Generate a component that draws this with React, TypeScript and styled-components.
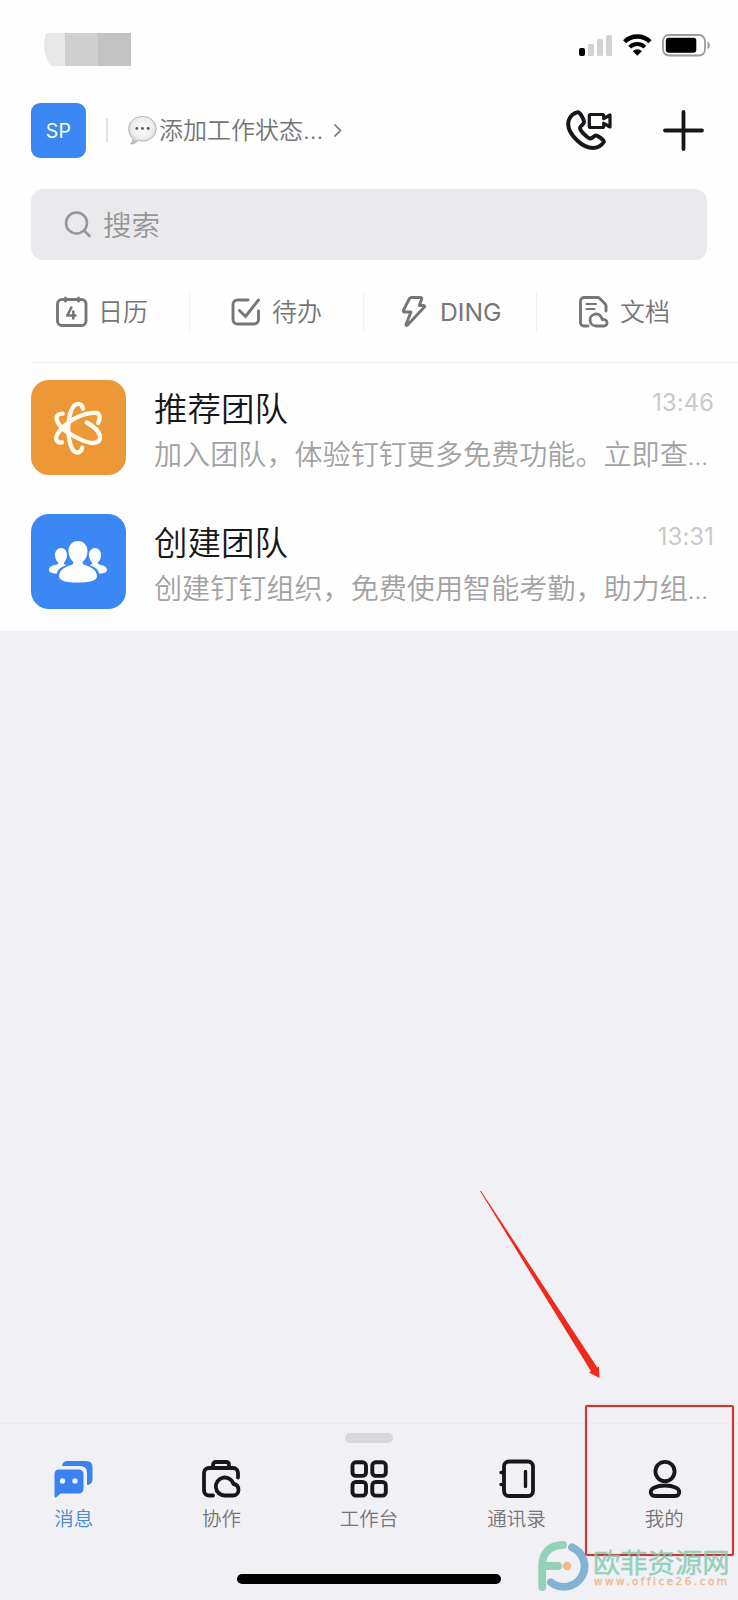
import React from 'react';
import styled, { createGlobalStyle } from 'styled-components';

const GlobalStyle = createGlobalStyle`
  * { box-sizing: border-box; }
  body { margin: 0; background: #f1f0f5; font-family: Inter, "Noto Sans CJK SC", sans-serif; }
  svg { display: block; flex: none; overflow: visible; }
`;

const Screen = styled.div`
  position: relative;
  width: 738px;
  height: 1600px;
  display: flex;
  flex-direction: column;
  overflow: hidden;
  background: #f1f0f5;
  font-weight: 350;
`;
const Panel = styled.div`background: #fefefe; height: 630.5px; flex: none;`;

const StatusBar = styled.div`
  height: 102.5px;
  padding: 33px 28px 0 44px;
  display: flex;
  justify-content: space-between;
  align-items: flex-start;
`;
const StatusIcons = styled.div`display: flex; gap: 10px; padding-top: 1px;`;

const Header = styled.div`
  height: 55px;
  padding: 0 34px 0 31px;
  display: flex;
  align-items: center;
`;
const Avatar = styled.div`
  width: 55px; height: 55px;
  border-radius: 9px;
  background: #3b87f3;
  color: #fff;
  font: 400 19.5px/56px Inter, sans-serif;
  letter-spacing: 0.3px;
  text-align: center;
`;
const Rule = styled.div`
  width: 2px;
  height: 24px;
  margin-left: 20px;
  background: #e3e3e3;
`;
const WorkStatus = styled.div`
  display: flex;
  align-items: center;
  margin-left: 20px;
  flex: 1;
  color: #747474;
  font-size: 24px;
  line-height: 36px;
`;
const WorkText = styled.span`margin: 2px 11px 0 1px; white-space: nowrap;`;
const Actions = styled.div`display: flex; gap: 51px; align-items: center;`;

const Search = styled.div`
  margin: 31.5px 31px 0;
  height: 71px;
  padding-left: 34px;
  border-radius: 12px;
  background: #eaeaec;
  display: flex;
  align-items: center;
  gap: 12px;
  color: #969698;
  font-size: 28.5px;
  line-height: 40px;
`;
const SearchLabel = styled.span`padding-top: 2px;`;

const Shortcuts = styled.div`
  margin: 31px 0 0 31px;
  height: 71px;
  width: 677px;
  display: flex;
`;
const Shortcut = styled.div<{ $w: number; $pad: number; $gap: number; $latin?: boolean }>`
  width: ${p => p.$w}px;
  height: 42px;
  padding-left: ${p => p.$pad}px;
  display: flex;
  align-items: center;
  gap: ${p => p.$gap}px;
  color: #767676;
  font-size: ${p => (p.$latin ? 24.7 : 25)}px;
  font-weight: ${p => (p.$latin ? 400 : 350)};
  line-height: 36px;
  & + & { border-left: 1px solid #f2f2f2; }
`;

const List = styled.div`margin-left: 31px; border-top: 1px solid #f0f0f0;`;
const Row = styled.div`
  height: 134px;
  padding: 17px 24px 0 0;
  display: flex;
  gap: 28px;
`;
const Tile = styled.div<{ $bg: string }>`
  width: 95px; height: 95px;
  flex: none;
  border-radius: 18px;
  background: ${p => p.$bg};
  display: flex;
  align-items: center;
  justify-content: center;
`;
const RowBody = styled.div`flex: 1; min-width: 0; padding-top: 5px;`;
const RowHead = styled.div`display: flex; justify-content: space-between; height: 49px;`;
const Title = styled.div`font-size: 33.5px; line-height: 48px; color: #171717;`;
const Time = styled.div`font-size: 23.6px; font-weight: 400; line-height: 35px; letter-spacing: 0.2px; color: #c9c9c9;`;
const Preview = styled.div`
  font-size: 28.1px;
  line-height: 42px;
  color: #a2a2a2;
  white-space: nowrap;
`;
const Dots = styled.span`font-size: 24px;`;

const Spacer = styled.div`flex: 1;`;
const TabBar = styled.nav`
  height: 177px;
  flex: none;
  border-top: 1px solid #ebebef;
  display: flex;
  flex-direction: column;
  align-items: center;
`;
const Handle = styled.div`width: 48px; height: 10px; margin-top: 9px; border-radius: 5px; background: #d5d8dc;`;
const Tabs = styled.div`display: flex; width: 100%; margin-top: 17px; height: 114px;`;
const Tab = styled.div<{ $active?: boolean }>`
  flex: 1;
  display: flex;
  flex-direction: column;
  align-items: center;
  gap: 6px;
  font-size: 19.5px;
  line-height: 30px;
  color: ${p => (p.$active ? '#4c88d6' : '#757578')};
`;
const HomeBar = styled.div`width: 264px; height: 10px; border-radius: 5px; background: #000;`;

const Highlight = styled.div`
  position: absolute;
  left: 585px; top: 1405px;
  width: 149px; height: 151px;
  border: 2px solid #c63a35;
  border-radius: 2px;
  box-shadow: 0 0 2px #f3aeaa, inset 0 0 2px #f3aeaa;
`;
const Arrow = styled.svg`position: absolute; left: 470px; top: 1180px;`;
const Watermark = styled.div`
  position: absolute;
  left: 537px; top: 1540px;
  display: flex;
  gap: 5px;
  opacity: 0.8;
`;
const WatermarkText = styled.div`padding-top: 7px; white-space: nowrap;`;
const WatermarkName = styled.div`
  font: 400 27.3px/28px "Noto Sans CJK SC", sans-serif;
  -webkit-text-stroke: 0.4px #7acbab;
  color: #7acbab;
`;
const WatermarkUrl = styled.div`
  font: 400 10.5px/12px "DejaVu Sans", sans-serif;
  -webkit-text-stroke: 0.3px #efad67;
  letter-spacing: 2.45px;
  padding-left: 1px;
  color: #efad67;
`;

const stroke = (w: number, color: string) => ({
  fill: 'none', stroke: color, strokeWidth: w, strokeLinecap: 'round' as const, strokeLinejoin: 'round' as const,
});
const INK = '#17171b';
const GREY = '#767676';

const HiddenClock = () => (
  <svg width="87" height="33">
    <path d="M2 0H21V33H7C1 25-2 12 2 0Z" fill="#e8e8e8" />
    <path d="M21 0H54V33H21Z" fill="#cfcfcf" />
    <path d="M54 0H87V33H54Z" fill="#c2c2c2" />
  </svg>
);
const Signal = () => (
  <svg width="34" height="22">
    <rect x="0" y="14" width="6" height="8" rx="2" fill="#000" />
    <rect x="9" y="10" width="6" height="12" rx="1.6" fill="#d2d2d2" />
    <rect x="18" y="5" width="6" height="17" rx="1.6" fill="#d2d2d2" />
    <rect x="27" y="1" width="6" height="21" rx="1.6" fill="#d2d2d2" />
  </svg>
);
const Wifi = () => (
  <svg width="29" height="22">
    <path d="M1.6 7.8a18 18 0 0 1 25.4 0" fill="none" stroke="#000" strokeWidth="4.4" />
    <path d="M6.7 13.2a10.8 10.8 0 0 1 15.2 0" fill="none" stroke="#000" strokeWidth="4" />
    <path d="M9.8 17.2a6.4 6.4 0 0 1 9 0l-4.5 4.6Z" fill="#000" />
  </svg>
);
const Battery = () => (
  <svg width="48" height="22">
    <rect x="1" y="1" width="42" height="20.5" rx="6" fill="none" stroke="#9b9b9b" strokeWidth="1.8" />
    <rect x="3.8" y="3.8" width="30.5" height="15" rx="3" fill="#000" />
    <path d="M45.5 7.5c3 1 3 6.5 0 7.5Z" fill="#9b9b9b" />
  </svg>
);
const Bubble = () => (
  <svg width="30" height="31">
    <defs>
      <radialGradient id="bubble" cx="50%" cy="42%" r="58%">
        <stop offset="0" stopColor="#ffffff" />
        <stop offset=".7" stopColor="#ececec" />
        <stop offset="1" stopColor="#bdbdbd" />
      </radialGradient>
    </defs>
    <path d="M14.5 1.5c7.8 0 13.6 5.3 13.6 12.3S22.5 26 14.5 26c-1.6 0-3-.1-4.3-.6C8.3 27.6 5.5 29 2.5 29c1.5-1.6 2.5-3.2 2.4-5.5C2 21 .7 17.8.7 13.8.7 6.8 6.7 1.5 14.5 1.5Z" fill="url(#bubble)" stroke="#b5b5b5" strokeWidth="1" />
    <circle cx="8.8" cy="13.5" r="1.4" fill="#555" />
    <circle cx="14.5" cy="13.5" r="1.4" fill="#555" />
    <circle cx="20.2" cy="13.5" r="1.4" fill="#555" />
  </svg>
);
const Chevron = () => <svg width="8" height="14"><path d="M1 2 6.5 7.5 1 13" {...stroke(1.7, GREY)} /></svg>;
const VideoCall = () => (
  <svg width="46" height="40">
    <path d="M9.5 2.8C5.5 4.5 2.2 8.8 2.2 14c0 5.500 3.600 11.500 9.300 16.800C16.500 35.500 22 38 27 38c4.500 0 8.500-2.500 10.800-6 .8-1.500-6-6.500-8-6.500-1.800 0-3.300 3-5.300 3C22 28.500 14 21 14 18c0-2 4-3.500 4-6 0-3.200-4.200-9.700-6-9.700-.8 0-1.700.2-2.500.5Z" {...stroke(4, INK)} />
    <path d="M24.500 4.500h12q1.200 0 1.200 1.200v3L44 5v12l-6.300-3.700v3q0 1.200-1.200 1.200h-12q-1.200 0-1.200-1.200V5.700q0-1.200 1.200-1.200Z" {...stroke(3.200, INK)} />
  </svg>
);
const Plus = () => <svg width="41" height="41"><path d="M20.500 2v37M2 20.500h37" {...stroke(3.800, INK)} /></svg>;
const SearchIcon = () => (
  <svg width="26" height="27"><circle cx="11.500" cy="12" r="10.500" {...stroke(2.500, '#969698')} /><path d="m19 19.500 5.500 5.500" {...stroke(2.500, '#969698')} /></svg>
);
const CalendarIcon = () => (
  <svg width="32" height="32">
    <rect x="1.500" y="3.500" width="28.500" height="26" rx="4.500" {...stroke(2.900, GREY)} />
    <path d="M9.500 2v3M22.500 2v3" {...stroke(3, GREY)} />
    <path d="M15.300 11.500 11.300 19.500H19.500M17.300 15.500v7" {...stroke(2.600, GREY)} />
  </svg>
);
const TodoIcon = () => (
  <svg width="30" height="30">
    <path d="M17 3H6.500A4.500 4.500 0 0 0 2 7.500v15A4.500 4.500 0 0 0 6.500 27h16.500a4.500 4.500 0 0 0 4.500-4.500V14" {...stroke(2.900, GREY)} />
    <path d="m8.500 13.500 6 6L27.500 3" {...stroke(2.900, GREY)} />
  </svg>
);
const DingIcon = () => (
  <svg width="24" height="32">
    <path d="M9 1.500H18.500q1.800 0 1.200 1.600L17.300 9.500H21.500q2 .2.700 1.800L5.800 28.800q-2 1.500-1.800-.6L9 16H2.800q-2-.2-1.200-2L7.500 2.500Z" {...stroke(2.900, GREY)} />
  </svg>
);
const DocIcon = () => (
  <svg width="30" height="32">
    <path d="M9 30H5a3.500 3.500 0 0 1-3.500-3.500V5A3.500 3.500 0 0 1 5 1.500h13.500q1.200 0 2 .8l5.500 5.500q1 1 1 2.200v5" {...stroke(2.900, GREY)} />
    <path d="M7.500 8H17M7.500 13H15.500" {...stroke(2.200, GREY)} />
    <path d="M17 30a6 6 0 1 1 5.500-8.500c.4.800.6 1.400.6 2.100 3-.6 5 1.100 5 3.300A3.100 3.100 0 0 1 25 30Z" {...stroke(2.800, GREY)} />
  </svg>
);
const AtomIcon = () => (
  <svg width="52" height="54">
    <path d="M30 7.800C29.500 4.500 27.500 2.800 25 2.800c-6.500 0-9.800 13.500-9.800 24.700S18.500 51.500 24.200 51.500c2.500 0 4.500-2 5-4.800" {...stroke(4.300, '#fffbf0')} />
    <path d="M9.700 12.700C5 12.200 2.500 15.500 4 19.500 5.500 24 9 27.500 14 31 23 36.500 33 42 39.500 42c5.500 0 8.500-2.500 7.300-7.500-1-4.500-7.300-9.800-13.100-13" {...stroke(4.300, '#fffbf0')} />
    <path d="M9 41.300C4.500 42.500 2.300 39 3.500 35 5 30.500 13 22 22 17.300 30 13 39.500 11 44 12.200c3.500 1 3.200 5 1.200 9.600" {...stroke(4.300, '#fffbf0')} />
    <circle cx="13" cy="27" r="3.500" fill="#fffbf0" />
  </svg>
);
const TeamIcon = () => (
  <svg width="59" height="42" fill="#fff">
    <path d="M29 0c6 0 9.500 4.500 9.500 10 0 5-2 8-4.300 10.500-1.200 1.300-1 2.500 1 3.200 5 1.800 12.800 4.500 12.800 11.300C48 40 40 41.500 29 41.500S10 40 10 35c0-6.800 7.800-9.500 12.800-11.300 2-.7 2.200-1.900 1-3.200C21.500 18 19.500 15 19.500 10 19.500 4.500 23 0 29 0Z" />
    <path d="M12 7c3.500 0 6 3 6 7 0 3.500-1.200 5.500-2.700 7.200-1 1.200-.8 1.800.6 2.300l1.500.6C13 26 8.500 28 8 32.500c-5-.2-8-1-8-3.500 0-3.500 3-4.500 7.800-5.600 1.700-.5 1.900-1.200.9-2.300C7.200 19.500 6 17.500 6 14c0-4 2.500-7 6-7Z" />
    <path d="M46 7c-3.500 0-6 3-6 7 0 3.500 1.200 5.500 2.700 7.200 1 1.200.8 1.800-.6 2.300l-1.500.6C45 26 49.500 28 50 32.500c5-.2 8-1 8-3.500 0-3.500-3-4.500-7.800-5.600-1.700-.5-1.900-1.200-.9-2.300C50.800 19.500 52 17.500 52 14c0-4-2.500-7-6-7Z" />
  </svg>
);
const MessagesIcon = () => (
  <svg width="39" height="38">
    <path d="M8 6Q8.500 1 14 1H32Q38.500 1 38.500 7V20Q38 24.500 33 25V13Q33 6 26 6Z" fill="#3a82ef" />
    <path d="M5 9.500H24.500Q29.500 9.500 29.500 14.500V28Q29.500 33.500 24.500 33.500H6.500L2.500 37Q.5 38.500.5 36V14.500Q.5 9.500 5 9.500Z" fill="#3a82ef" />
    <circle cx="8.500" cy="21" r="2.700" fill="#e9f1fd" /><circle cx="21" cy="21" r="2.700" fill="#e9f1fd" />
  </svg>
);
const CollabIcon = () => (
  <svg width="38" height="38">
    <path d="M11 35.500H7A5 5 0 0 1 2 30.500V13A5 5 0 0 1 7 8H31A5 5 0 0 1 36 13V17.500" {...stroke(3.800, INK)} />
    <path d="M11 7V5Q11 2 14 2H24Q27 2 27 5V7" {...stroke(3.800, INK)} />
    <path d="M23 35.500A9 9 0 1 1 31.500 24C35 24.500 36.500 27 36.500 30A5.500 5.500 0 0 1 31 35.500Z" {...stroke(3.800, INK)} />
  </svg>
);
const WorkbenchIcon = () => (
  <svg width="38" height="38">
    {[2.500, 22.300].map(x => [2.300, 22].map(y => (
      <rect key={`${x}-${y}`} x={x} y={y} width="13.500" height="13.600" rx="3.400" {...stroke(3.900, INK)} />
    )))}
  </svg>
);
const ContactsIcon = () => (
  <svg width="38" height="38">
    <rect x="6" y="1.500" width="29" height="34.500" rx="5" {...stroke(3.800, INK)} />
    <path d="M3 12.500h3M3 24.500h3M27.500 11.500v15" {...stroke(3.400, INK)} />
  </svg>
);
const MineIcon = () => (
  <svg width="33" height="38">
    <circle cx="17" cy="11.500" r="9.600" {...stroke(3.800, INK)} />
    <path d="M17 25.500c9 0 14.300 3 14.300 6.500 0 2.300-1.500 4-4 4H6.700c-2.500 0-4-1.700-4-4 0-3.500 5.300-6.500 14.300-6.500Z" {...stroke(3.800, INK)} />
  </svg>
);
const WatermarkLogo = () => (
  <svg width="51" height="51">
    <path d="M26 5C13 5 5.200 13 5.200 25V47M5.200 26H21" {...stroke(7.800, '#7acbab')} />
    <path d="M35 7.300A20.600 20.600 0 1 1 14 42.300" {...stroke(7.800, '#67a3cf')} />
    <circle cx="30" cy="26" r="4.300" fill="#efad67" />
  </svg>
);

const shortcuts = [
  { label: '日历', icon: <CalendarIcon />, w: 158, pad: 25, gap: 10 },
  { label: '待办', icon: <TodoIcon />, w: 174, pad: 41, gap: 11 },
  { label: 'DING', icon: <DingIcon />, w: 173, pad: 38, gap: 14, latin: true },
  { label: '文档', icon: <DocIcon />, w: 172, pad: 42, gap: 11 },
];
const chats = [
  { title: '推荐团队', time: '13:46', text: '加入团队，体验钉钉更多免费功能。立即查', bg: '#ec9837', icon: <AtomIcon /> },
  { title: '创建团队', time: '13:31', text: '创建钉钉组织，免费使用智能考勤，助力组', bg: '#3b87f3', icon: <TeamIcon /> },
];
const tabs = [
  { label: '消息', icon: <MessagesIcon /> },
  { label: '协作', icon: <CollabIcon /> },
  { label: '工作台', icon: <WorkbenchIcon /> },
  { label: '通讯录', icon: <ContactsIcon /> },
  { label: '我的', icon: <MineIcon /> },
];

export default function App() {
  return (
    <Screen>
      <GlobalStyle />
      <Panel>
        <StatusBar>
          <HiddenClock />
          <StatusIcons><Signal /><Wifi /><Battery /></StatusIcons>
        </StatusBar>
        <Header>
          <Avatar>SP</Avatar>
          <Rule />
          <WorkStatus><Bubble /><WorkText>添加工作状态...</WorkText><Chevron /></WorkStatus>
          <Actions><VideoCall /><Plus /></Actions>
        </Header>
        <Search><SearchIcon /><SearchLabel>搜索</SearchLabel></Search>
        <Shortcuts>
          {shortcuts.map(s => (
            <Shortcut key={s.label} $w={s.w} $pad={s.pad} $gap={s.gap} $latin={s.latin}>{s.icon}{s.label}</Shortcut>
          ))}
        </Shortcuts>
        <List>
          {chats.map(c => (
            <Row key={c.title}>
              <Tile $bg={c.bg}>{c.icon}</Tile>
              <RowBody>
                <RowHead><Title>{c.title}</Title><Time>{c.time}</Time></RowHead>
                <Preview>{c.text}<Dots>...</Dots></Preview>
              </RowBody>
            </Row>
          ))}
        </List>
      </Panel>
      <Spacer />
      <TabBar>
        <Handle />
        <Tabs>
          {tabs.map((t, i) => <Tab key={t.label} $active={i === 0}>{t.icon}{t.label}</Tab>)}
        </Tabs>
        <HomeBar />
      </TabBar>
      <Arrow width="140" height="210">
        <path d="M10 11 11 11 127.300 187.600 129 186.500 129.500 198 119 192.500 121 191.300Z" fill="#ef2a1d" />
      </Arrow>
      <Highlight />
      <Watermark>
        <WatermarkLogo />
        <WatermarkText>
          <WatermarkName>欧菲资源网</WatermarkName>
          <WatermarkUrl>www.office26.com</WatermarkUrl>
        </WatermarkText>
      </Watermark>
    </Screen>
  );
}
